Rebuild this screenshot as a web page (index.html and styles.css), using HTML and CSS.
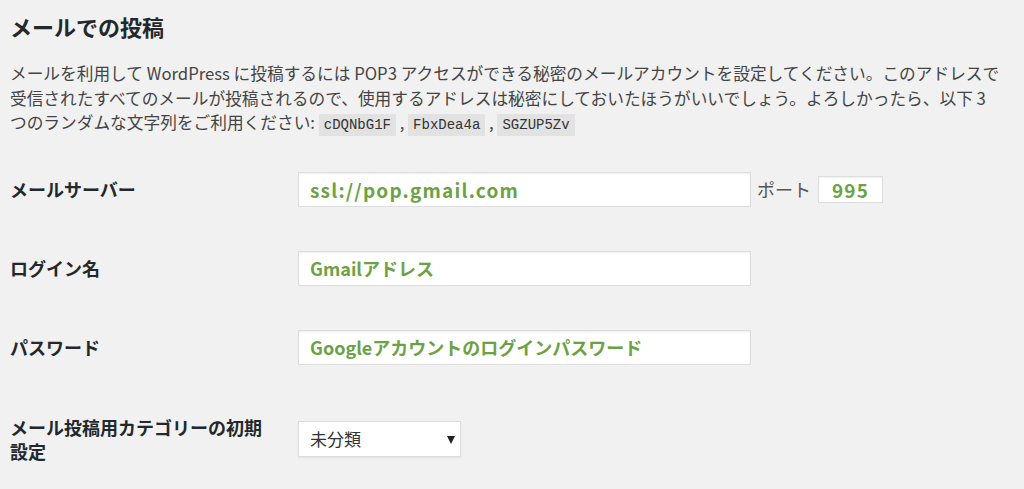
FILE: index.html
```html
<!DOCTYPE html>
<html lang="ja">
<head>
<meta charset="utf-8">
<title>メールでの投稿</title>
<link rel="stylesheet" href="styles.css">
</head>
<body>
<div class="wrap">
  <h2 class="title">メールでの投稿</h2>
  <p class="desc">メールを利用して WordPress に投稿するには POP3 アクセスができる秘密のメールアカウントを設定してください。このアドレスで<br>受信されたすべてのメールが投稿されるので、使用するアドレスは秘密にしておいたほうがいいでしょう。よろしかったら、以下 3<br>つのランダムな文字列をご利用ください: <code>cDQNbG1F</code> , <code>FbxDea4a</code> , <code>SGZUP5Zv</code></p>

  <div class="form">
    <div class="label">メールサーバー</div>
    <div class="field">
      <input class="text wide-latin" type="text" value="ssl://pop.gmail.com" readonly>
      <span class="port-label">ポート</span>
      <input class="text port wide-latin" type="text" value="995" readonly>
    </div>

    <div class="label">ログイン名</div>
    <div class="field">
      <input class="text" type="text" value="Gmailアドレス" readonly>
    </div>

    <div class="label">パスワード</div>
    <div class="field">
      <input class="text" type="text" value="Googleアカウントのログインパスワード" readonly>
    </div>

    <div class="label label-last">メール投稿用カテゴリーの初期<br>設定</div>
    <div class="field field-last">
      <span class="select-wrap">
        <select class="select">
          <option>未分類</option>
        </select>
      </span>
    </div>
  </div>
</div>
</body>
</html>
```

FILE: styles.css
```css
html, body {
  margin: 0;
  padding: 0;
  background: #f1f1f1;
}

body {
  font-family: "Noto Sans CJK JP", "Noto Sans", sans-serif;
  color: #444;
}

.wrap {
  padding: 12px 10px 0 10px;
}

.title {
  margin: 0;
  font-size: 22px;
  line-height: 29px;
  font-weight: 700;
  color: #23282d;
}

.desc {
  margin: 20px 0 0 0;
  font-size: 16.7px;
  line-height: 24.5px;
  color: #444;
  white-space: nowrap;
}

.desc code {
  font-family: "Liberation Mono", monospace;
  font-size: 14px;
  background: #e2e2e2;
  color: #333;
  padding: 3px 5px 3px;
}

.form {
  display: grid;
  grid-template-columns: 288px 1fr;
  row-gap: 44px;
  align-items: center;
  margin-top: 34px;
}

.label {
  font-size: 18px;
  line-height: 24px;
  font-weight: 700;
  color: #23282d;
}

.label-last,
.field-last {
  margin-top: 6px;
}

.field {
  display: flex;
  align-items: center;
}

.text {
  box-sizing: border-box;
  width: 453px;
  height: 35px;
  margin: 0;
  padding: 0 11px;
  border: 1px solid #ddd;
  background: #fff;
  box-shadow: inset 0 1px 2px rgba(0, 0, 0, 0.07);
  font-family: "Noto Sans CJK JP", "Noto Sans", sans-serif;
  font-size: 18px;
  font-weight: 700;
  color: #6ca244;
  outline: none;
}

.wide-latin {
  font-size: 19px;
  letter-spacing: 1.2px;
}

.port-label {
  margin-left: 6px;
  font-size: 18px;
  color: #555;
}

.port {
  width: 65px;
  height: 27px;
  margin-left: 7px;
  text-align: center;
  padding: 0;
}

.select-wrap {
  position: relative;
  display: inline-block;
}

.select-wrap::after {
  content: "";
  position: absolute;
  right: 6px;
  top: 15px;
  border-left: 4px solid transparent;
  border-right: 4px solid transparent;
  border-top: 8px solid #222;
  pointer-events: none;
}

.select {
  -webkit-appearance: none;
  appearance: none;
  box-sizing: border-box;
  width: 163px;
  height: 36px;
  margin: 0;
  padding: 0 11px;
  border: 1px solid #ddd;
  border-radius: 0;
  background: #fff;
  box-shadow: 0 1px 2px rgba(0, 0, 0, 0.07);
  font-family: "Noto Sans CJK JP", "Noto Sans", sans-serif;
  font-size: 17px;
  color: #333;
}
```
